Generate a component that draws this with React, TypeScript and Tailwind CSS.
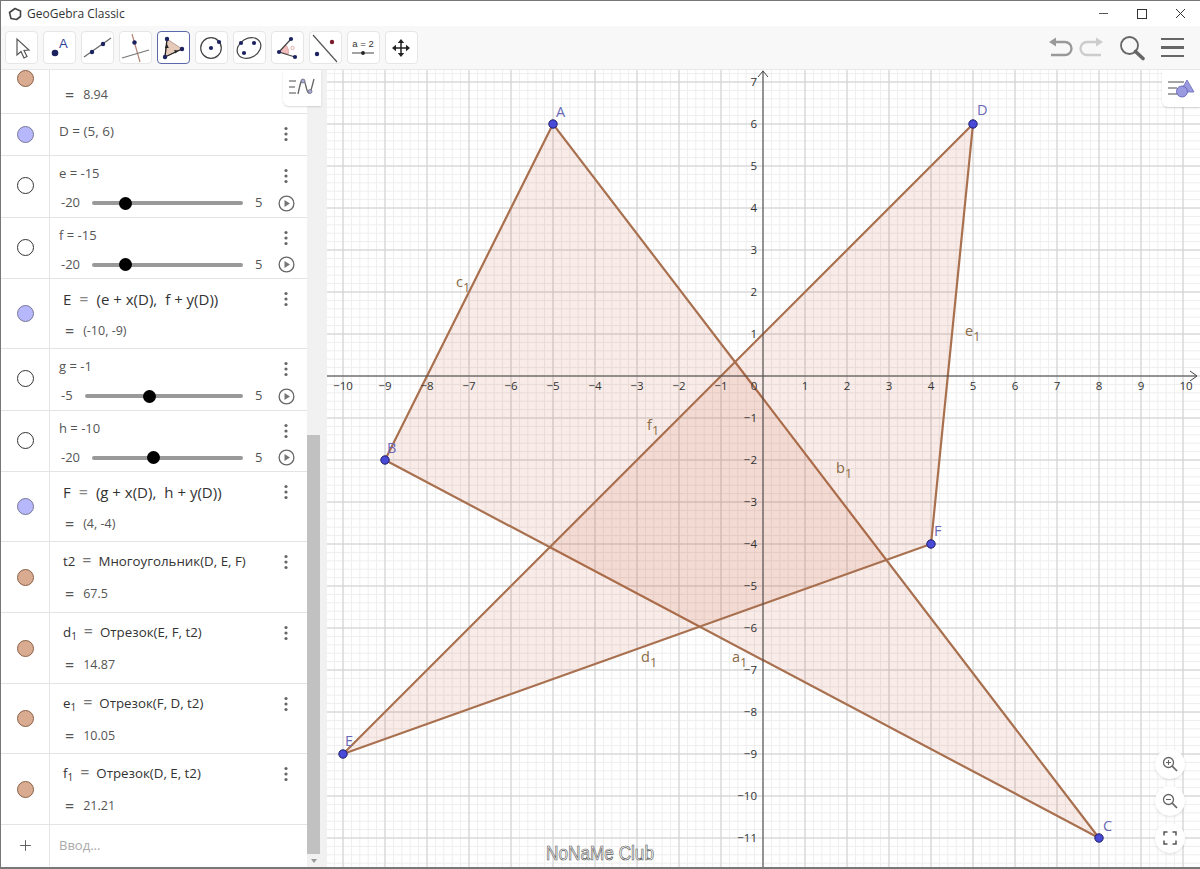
import React from "react";
import { Plus } from "lucide-react";

const FONT = "font-['Open_Sans','Noto_Sans',sans-serif]";

const px = (x: number) => 763 + 42 * x;
const py = (y: number) => 376 - 42 * y;
const range = (a: number, b: number) => Array.from({ length: b - a + 1 }, (_, i) => a + i);

const Dots = () => (
  <svg width="6" height="16" viewBox="0 0 6 16" className="block">
    <circle cx="3" cy="2.5" r="1.6" fill="#666" />
    <circle cx="3" cy="8" r="1.6" fill="#666" />
    <circle cx="3" cy="13.5" r="1.6" fill="#666" />
  </svg>
);

const Marble = ({ color, edge }: { color: string; edge: string }) => (
  <span className="w-[17px] h-[17px] rounded-full border" style={{ background: color, borderColor: edge }} />
);

const BROWN = "#d9ab90";
const BLUE = "#b7b7fb";
const BROWN_EDGE = "#8a6248";
const BLUE_EDGE = "#777798";

type RowProps = {
  h: string;
  color: string;
  edge: string;
  top: React.ReactNode;
  value?: string;
  indent?: string;
  dark?: boolean;
};

const Row = ({ h, color, edge, top, value, indent = "pl-[9px]", dark }: RowProps) => (
  <div className={`flex shrink-0 border-b border-[#e4e4e4] ${h}`}>
    <div className="w-[49px] shrink-0 border-r border-[#e4e4e4] flex items-center justify-center">
      <Marble color={color} edge={edge} />
    </div>
    <div className="flex-1 min-w-0 relative flex flex-col">
      <div className="flex justify-between items-center h-[40px] pr-[18px]">
        <div className={`${indent} text-[13.3px] whitespace-nowrap ${dark ? "text-[#333]" : "text-[#555]"}`}>{top}</div>
        <Dots />
      </div>
      {value && (
        <div className="flex items-center gap-[9px] pl-[15px] text-[12.5px] text-[#555] mt-[3px]">
          <span className="text-[16px] leading-none">=</span>
          <span>{value}</span>
        </div>
      )}
    </div>
  </div>
);

const Seg = ({ n, sub, args }: { n: string; sub?: string; args: string }) => (
  <span className="text-[#333]">
    {n}
    {sub && <sub className="text-[10px]">{sub}</sub>}
    <span className="text-[#777] text-[16px] leading-none mx-[7px]">=</span>
    {args}
  </span>
);

const Formula = ({ n, a, b }: { n: string; a: string; b: string }) => (
  <span className="text-[15px]">
    {n}
    <span className="text-[#888] text-[16px] leading-none mx-[8px]">=</span>
    {a}
    <span className="ml-[8px]">{b}</span>
  </span>
);

const SliderRow = ({ name, value, min, max, shortMin }: { name: string; value: number; min: number; max: number; shortMin?: boolean }) => {
  const frac = (value - min) / (max - min);
  return (
    <div className="flex shrink-0 h-[61.5px] border-b border-[#e4e4e4]">
      <div className="w-[49px] shrink-0 border-r border-[#e4e4e4] flex items-center justify-center pb-[1px]">
        <Marble color="#fff" edge="#333" />
      </div>
      <div className="flex-1 min-w-0 flex flex-col pt-[8px] pr-[12px]">
        <div className="flex justify-between items-start h-[24px] pr-[6px]">
          <span className="pl-[9px] text-[13px] text-[#555]">
            {name} = {value}
          </span>
          <span className="pt-[4px]">
            <Dots />
          </span>
        </div>
        <div className="flex items-center h-[24px] mt-[3px] text-[13px] text-[#555]">
          <span className={`pl-[11px] ${shortMin ? "w-[35px]" : "w-[42px]"}`}>{min}</span>
          <div className="flex-1 relative h-[4px] bg-[#999] rounded-sm">
            <span
              className="absolute top-[-4.5px] w-[13px] h-[13px] rounded-full bg-black -ml-[6.5px]"
              style={{ left: `calc(6px + ${frac} * (100% - 12px))` }}
            />
          </div>
          <span className="w-[35px] pl-[12px]">{max}</span>
          <svg width="17" height="17" viewBox="0 0 17 17" className="shrink-0">
            <circle cx="8.5" cy="8.5" r="7.4" fill="none" stroke="#666" strokeWidth="1.3" />
            <path d="M6.5 5 L12 8.5 L6.5 12 Z" fill="#777" />
          </svg>
        </div>
      </div>
    </div>
  );
};

const NAVY = "#1c2260";

const toolIcons: React.ReactNode[] = [
  <path key="a" d="M12 8 L12 24 L16 20.5 L19 27 L22 25.5 L19 19.5 L24 19 Z" fill="#fff" stroke="#555" strokeWidth="1.2" />,
  <g key="b">
    <circle cx="12" cy="22" r="3.3" fill={NAVY} />
    <text x="16" y="17" fontSize="13" fill="#2f3f9e" fontFamily="Liberation Sans, sans-serif">A</text>
  </g>,
  <g key="c">
    <line x1="3" y1="26" x2="30" y2="7" stroke="#666" strokeWidth="1.2" />
    <circle cx="11" cy="21" r="2.2" fill={NAVY} />
    <circle cx="22" cy="13" r="2.2" fill={NAVY} />
  </g>,
  <g key="d">
    <line x1="13" y1="3" x2="21" y2="31" stroke="#b58676" strokeWidth="1.2" />
    <line x1="3" y1="27" x2="30" y2="19" stroke="#777" strokeWidth="1.2" />
    <circle cx="15.5" cy="11.5" r="2.2" fill={NAVY} />
  </g>,
  <g key="e">
    <path d="M10 8 L25 18 L8 26 Z" fill="#e6cbbb" stroke="#a98a78" strokeWidth="0.8" />
    <path d="M8 26 L10 8 M8 26 L25 18" stroke="#222" strokeWidth="1.3" />
    <path d="M10 13 L7.8 17 L11.8 17 Z M21 19.5 L17 19 L18.7 22.6 Z" fill="#222" />
    <circle cx="10" cy="8" r="2.2" fill={NAVY} />
    <circle cx="25" cy="18" r="2.2" fill={NAVY} />
    <circle cx="8" cy="26" r="2.2" fill={NAVY} />
  </g>,
  <g key="f">
    <circle cx="16" cy="17" r="10.3" fill="none" stroke="#444" strokeWidth="1.2" />
    <circle cx="16" cy="17" r="2.1" fill={NAVY} />
    <circle cx="24" cy="11" r="2.1" fill={NAVY} />
  </g>,
  <g key="g">
    <ellipse cx="16" cy="17" rx="12.5" ry="9.5" transform="rotate(-30 16 17)" fill="none" stroke="#444" strokeWidth="1.2" />
    <circle cx="8" cy="12" r="2.1" fill={NAVY} />
    <circle cx="21" cy="12" r="2.1" fill={NAVY} />
    <circle cx="11" cy="22" r="2.1" fill={NAVY} />
  </g>,
  <g key="h">
    <path d="M8 21 L14.5 14 A9 9 0 0 1 17 23.5 Z" fill="#f1bcbc" stroke="#c98a8a" strokeWidth="0.6" />
    <path d="M20 8 L8 21 L24 26" fill="none" stroke="#444" strokeWidth="1.2" />
    <circle cx="20" cy="8" r="2.1" fill={NAVY} />
    <circle cx="8" cy="21" r="2.1" fill={NAVY} />
    <circle cx="24" cy="26" r="2.1" fill={NAVY} />
    <circle cx="21.5" cy="17" r="1.7" fill="none" stroke="#d99" strokeWidth="0.8" />
  </g>,
  <g key="i">
    <line x1="4" y1="4" x2="28" y2="31" stroke="#555" strokeWidth="1.2" />
    <circle cx="23" cy="11" r="2.2" fill="#7a1c2c" />
    <circle cx="8" cy="23" r="2.2" fill={NAVY} />
  </g>,
  <g key="j">
    <text x="16" y="16" textAnchor="middle" fontSize="9.5" fill="#333" fontFamily="Liberation Sans, sans-serif">a = 2</text>
    <line x1="5" y1="22" x2="27" y2="22" stroke="#666" strokeWidth="1.2" />
    <circle cx="16" cy="22" r="1.9" fill="#222" />
  </g>,
  <g key="k">
    <path d="M16 11 V23 M10 17 H22" stroke="#222" strokeWidth="1.5" />
    <path d="M16 8 L12.8 12 H19.2 Z M16 26 L12.8 22 H19.2 Z M7 17 L11 13.8 V20.2 Z M25 17 L21 13.8 V20.2 Z" fill="#222" />
  </g>,
];

const Toolbar = () => (
  <div className="h-[44px] shrink-0 bg-[#f8f8f8] flex items-center justify-between pl-[4px] pr-[16px] border-b border-[#e8e8e8]">
    <div className="flex gap-[5px] items-center">
      {toolIcons.map((icon, i) => (
        <div
          key={i}
          className={`w-[33px] h-[33px] rounded-[4px] bg-white border ${i === 4 ? "border-[#5d68a8] border-[1.5px]" : "border-[#e6e6e6]"}`}
        >
          <svg width="33" height="33" viewBox="0 0 33 33" className={`block ${i === 4 ? "-m-[1.5px]" : "-m-[1px]"}`}>
            {icon}
          </svg>
        </div>
      ))}
    </div>
    <div className="flex items-center">
      <svg width="25" height="22" viewBox="0 0 25 22" className="mr-[6px]">
        <path d="M6 5 H17 A6.5 6.5 0 0 1 17 18 H3" fill="none" stroke="#999" strokeWidth="2.4" />
        <path d="M1 5 L8 0.5 V9.5 Z" fill="#999" />
      </svg>
      <svg width="25" height="22" viewBox="0 0 25 22" className="mr-[15px]">
        <path d="M19 5 H8 A6.5 6.5 0 0 0 8 18 H22" fill="none" stroke="#ccc" strokeWidth="2.4" />
        <path d="M24 5 L17 0.5 V9.5 Z" fill="#ccc" />
      </svg>
      <svg width="26" height="26" viewBox="0 0 26 26" className="mr-[16px]">
        <circle cx="10.5" cy="10.5" r="8.5" fill="none" stroke="#666" strokeWidth="1.8" />
        <line x1="16.5" y1="16.5" x2="24" y2="23.5" stroke="#666" strokeWidth="3.6" strokeLinecap="round" />
      </svg>
      <div className="flex flex-col gap-[6px] w-[23px]">
        <span className="h-[2.5px] bg-[#666]" />
        <span className="h-[2.5px] bg-[#666]" />
        <span className="h-[2.5px] bg-[#666]" />
      </div>
    </div>
  </div>
);

const AlgebraView = () => (
  <div className={`w-[306px] shrink-0 flex flex-col overflow-hidden bg-white ${FONT}`}>
    <div className="flex-1 min-h-0 overflow-hidden">
      <div className="-mt-[27px]">
        <Row h="h-[71px]" color={BROWN} edge={BROWN_EDGE} top={<Seg n="c" sub="1" args="Отрезок(A, B, t1)" />} value="8.94" indent="pl-[13px]" />
        <Row h="h-[42px]" color={BLUE} edge={BLUE_EDGE} top={<span className="block pb-[5px] text-[13.5px]">D = (5, 6)</span>} />
        <SliderRow name="e" value={-15} min={-20} max={5} />
        <SliderRow name="f" value={-15} min={-20} max={5} />
        <Row h="h-[70px]" color={BLUE} edge={BLUE_EDGE} dark indent="pl-[13px]" top={<Formula n="E" a="(e + x(D)," b="f + y(D))" />} value="(-10, -9)" />
        <SliderRow name="g" value={-1} min={-5} max={5} shortMin />
        <SliderRow name="h" value={-10} min={-20} max={5} />
        <Row h="h-[70px]" color={BLUE} edge={BLUE_EDGE} dark indent="pl-[13px]" top={<Formula n="F" a="(g + x(D)," b="h + y(D))" />} value="(4, -4)" />
        <Row h="h-[71px]" color={BROWN} edge={BROWN_EDGE} dark indent="pl-[13px]" top={<Seg n="t2" args="Многоугольник(D, E, F)" />} value="67.5" />
        <Row h="h-[71px]" color={BROWN} edge={BROWN_EDGE} indent="pl-[13px]" top={<Seg n="d" sub="1" args="Отрезок(E, F, t2)" />} value="14.87" />
        <Row h="h-[70px]" color={BROWN} edge={BROWN_EDGE} indent="pl-[13px]" top={<Seg n="e" sub="1" args="Отрезок(F, D, t2)" />} value="10.05" />
        <Row h="h-[71px]" color={BROWN} edge={BROWN_EDGE} indent="pl-[13px]" top={<Seg n="f" sub="1" args="Отрезок(D, E, t2)" />} value="21.21" />
        <div className="flex h-[41px]">
          <div className="w-[49px] shrink-0 border-r border-[#e4e4e4] flex items-center justify-center">
            <Plus size={17} strokeWidth={1.3} color="#555" />
          </div>
          <div className="flex-1 flex items-center pl-[9px] text-[13px] text-[#aaa]">Ввод...</div>
        </div>
      </div>
    </div>
  </div>
);

const Scrollbar = () => (
  <div className="w-[13px] shrink-0 bg-[#f1f1f1] flex flex-col">
    <div className="h-[365px] shrink-0" />
    <div className="flex-1 bg-[#c1c1c1]" />
    <div className="h-[13px] shrink-0 flex items-center justify-center">
      <span className="w-0 h-0 border-x-[3.5px] border-x-transparent border-t-[4px] border-t-[#999]" />
    </div>
  </div>
);

const labels: [string, string | null, number, number, string][] = [
  ["A", null, 556, 117, "#6a6ab8"],
  ["B", null, 387, 453, "#6a6ab8"],
  ["C", null, 1103, 831, "#6a6ab8"],
  ["D", null, 977, 115, "#6a6ab8"],
  ["E", null, 345, 746, "#6a6ab8"],
  ["F", null, 934, 536, "#6a6ab8"],
  ["c", "1", 456, 287, "#8a6a45"],
  ["b", "1", 836, 473, "#8a6a45"],
  ["e", "1", 965, 336, "#8a6a45"],
  ["f", "1", 647, 430, "#8a6a45"],
  ["d", "1", 641, 662, "#8a6a45"],
  ["a", "1", 732, 662, "#8a6a45"],
];

const GraphSvg = () => {
  const minorX = range(-55, 50).map((i) => 763 + 8.4 * i);
  const minorY = range(-40, 60).map((i) => 376 + 8.4 * i);
  const tri1 = [[-5, 6], [-9, -2], [8, -11]];
  const tri2 = [[5, 6], [-10, -9], [4, -4]];
  const toPts = (t: number[][]) => t.map(([x, y]) => `${px(x)},${py(y)}`).join(" ");
  const stroke = "#a8704f";
  const tickFont = "Open Sans, Noto Sans, sans-serif";
  return (
    <svg viewBox="327 70 873 797" className="block w-full h-full bg-white">
      {minorX.map((x) => <line key={x} x1={x} x2={x} y1={70} y2={867} stroke="#eeeeee" strokeWidth="1" />)}
      {minorY.map((y) => <line key={y} y1={y} y2={y} x1={327} x2={1200} stroke="#eeeeee" strokeWidth="1" />)}
      {range(-11, 10).map((i) => <line key={i} x1={px(i)} x2={px(i)} y1={70} y2={867} stroke="#cecece" strokeWidth="1" />)}
      {range(-12, 8).map((i) => <line key={i} y1={py(i)} y2={py(i)} x1={327} x2={1200} stroke="#cecece" strokeWidth="1" />)}

      <polygon points={toPts(tri1)} fill="#c34119" fillOpacity="0.1" stroke={stroke} strokeWidth="2.2" />
      <polygon points={toPts(tri2)} fill="#c34119" fillOpacity="0.1" stroke={stroke} strokeWidth="2.2" />

      <line x1={327} x2={1196} y1={376} y2={376} stroke="#444" strokeWidth="1" />
      <line x1={763} x2={763} y1={72} y2={867} stroke="#444" strokeWidth="1" />
      <path d="M758 77 L763 71 L768 77 M1190 371 L1197 376 L1190 381" fill="none" stroke="#444" strokeWidth="1" />

      <g fontSize="11.5" fontFamily={tickFont} fill="#333">
        {range(-10, 10).filter((i) => i !== 0).map((i) => (
          <text key={i} x={px(i) + (i === 10 ? 3 : 0)} y={390} textAnchor="middle">
            {i < 0 ? `−${-i}` : i}
          </text>
        ))}
        <text x={754} y={390} textAnchor="middle">0</text>
        {range(-11, 7).filter((i) => i !== 0).map((i) => (
          <text key={i} x={757} y={py(i) + 4} textAnchor="end">
            {i < 0 ? `−${-i}` : i}
          </text>
        ))}
      </g>

      <g fontSize="14.5" fontFamily={tickFont}>
        {labels.map(([t, s, x, y, c]) => (
          <text key={t} x={x} y={y} fill={c}>
            {t}
            {s && <tspan dy="5" fontSize="12.5">{s}</tspan>}
          </text>
        ))}
      </g>

      {[...tri1, ...tri2].map(([x, y]) => (
        <circle key={`${x}${y}`} cx={px(x)} cy={py(y)} r="4.2" fill="#4a4ad8" stroke="#1c1c6a" strokeWidth="1" />
      ))}

      <text
        x={600}
        y={860}
        textAnchor="middle"
        fontSize="21"
        fontFamily="Liberation Sans, sans-serif"
        textLength={108}
        lengthAdjust="spacingAndGlyphs"
        fill="#fff"
        stroke="#555"
        strokeWidth="0.7"
      >
        NoNaMe Club
      </text>
    </svg>
  );
};

const ZoomBtn = ({ children }: { children: React.ReactNode }) => (
  <div className="w-[30px] h-[30px] rounded-full bg-white shadow-[0_1px_3px_rgba(0,0,0,0.12)] flex items-center justify-center">
    {children}
  </div>
);

const GraphView = () => (
  <div className="flex-1 min-w-0 relative overflow-hidden">
    <GraphSvg />
    <div className="absolute top-0 right-0 w-[38px] h-[37px] bg-white rounded-bl-[6px] shadow-[0_1px_2px_rgba(0,0,0,0.15)] flex items-center justify-center">
      <svg width="28" height="24" viewBox="0 0 28 24">
        <path d="M1 5 H17 M1 11 H10 M1 17 H10" stroke="#888" strokeWidth="1.4" />
        <path d="M20 3 L27 15 H13 Z" fill="#9a9ae0" stroke="#6a6ab8" strokeWidth="0.8" />
        <circle cx="15" cy="14.5" r="5.5" fill="#9a9ae0" stroke="#5c5cb0" strokeWidth="0.8" />
      </svg>
    </div>
    <div className="absolute right-[15px] bottom-[14px] flex flex-col gap-[7px]">
      <ZoomBtn>
        <svg width="16" height="16" viewBox="0 0 16 16">
          <circle cx="6.5" cy="6.5" r="5" fill="none" stroke="#666" strokeWidth="1.3" />
          <path d="M4 6.5 H9 M6.5 4 V9" stroke="#666" strokeWidth="1.1" />
          <line x1="10.2" y1="10.2" x2="15" y2="15" stroke="#666" strokeWidth="1.7" />
        </svg>
      </ZoomBtn>
      <ZoomBtn>
        <svg width="16" height="16" viewBox="0 0 16 16">
          <circle cx="6.5" cy="6.5" r="5" fill="none" stroke="#666" strokeWidth="1.3" />
          <path d="M4 6.5 H9" stroke="#666" strokeWidth="1.1" />
          <line x1="10.2" y1="10.2" x2="15" y2="15" stroke="#666" strokeWidth="1.7" />
        </svg>
      </ZoomBtn>
      <ZoomBtn>
        <svg width="14" height="14" viewBox="0 0 14 14">
          <path d="M1 4.5 V1 H4.5 M9.5 1 H13 V4.5 M13 9.5 V13 H9.5 M4.5 13 H1 V9.5" fill="none" stroke="#555" strokeWidth="1.5" />
        </svg>
      </ZoomBtn>
    </div>
  </div>
);

const App = () => (
  <div className="w-[1200px] h-[869px] flex flex-col overflow-hidden bg-white border-t border-l border-b-2 border-[#777]">
    <div className="h-[25px] shrink-0 flex items-center justify-between pl-[7px] bg-white">
      <div className="flex items-center gap-[5px] text-[12px] text-[#333] font-['Open_Sans',sans-serif]">
        <svg width="14" height="14" viewBox="0 0 14 14">
          <path d="M7 1.5 L12.5 4 L12.5 9.5 L8.5 12.5 L3 11.5 L1.5 5.5 Z" fill="none" stroke="#444" strokeWidth="1.6" strokeLinejoin="round" />
        </svg>
        <span>GeoGebra Classic</span>
      </div>
      <div className="flex items-center text-[#333]">
        <div className="w-[39px] flex justify-center">
          <span className="w-[9px] h-[1.5px] bg-[#555]" />
        </div>
        <div className="w-[39px] flex justify-center -ml-[1px]">
          <span className="w-[10px] h-[10px] border border-[#333]" />
        </div>
        <div className="w-[39px] flex justify-center">
          <svg width="11" height="11" viewBox="0 0 11 11">
            <path d="M1 1 L10 10 M10 1 L1 10" stroke="#333" strokeWidth="1" />
          </svg>
        </div>
      </div>
    </div>
    <Toolbar />
    <div className="flex-1 min-h-0 flex relative">
      <AlgebraView />
      <Scrollbar />
      <div className="w-[7px] shrink-0 bg-[#f1f1f1]" />
      <GraphView />
      <div className="absolute left-[282px] top-0 w-[38px] h-[36px] bg-white rounded-bl-[6px] shadow-[0_1px_2px_rgba(0,0,0,0.15)] flex items-center justify-center">
        <svg width="28" height="24" viewBox="0 0 28 24">
          <path d="M1 5 H8 M1 11 H7 M1 17 H8" stroke="#888" strokeWidth="1.4" />
          <path d="M10 18 C12 8 13 4 15 4 C18 4 18 17 21 17 C23 17 24 10 26 3" fill="none" stroke="#666" strokeWidth="1.3" />
          <circle cx="15" cy="5" r="2" fill="#a9a9d8" stroke="#667" strokeWidth="0.7" />
          <circle cx="22" cy="15.5" r="2" fill="#a9a9d8" stroke="#667" strokeWidth="0.7" />
        </svg>
      </div>
    </div>
  </div>
);

export default App;
